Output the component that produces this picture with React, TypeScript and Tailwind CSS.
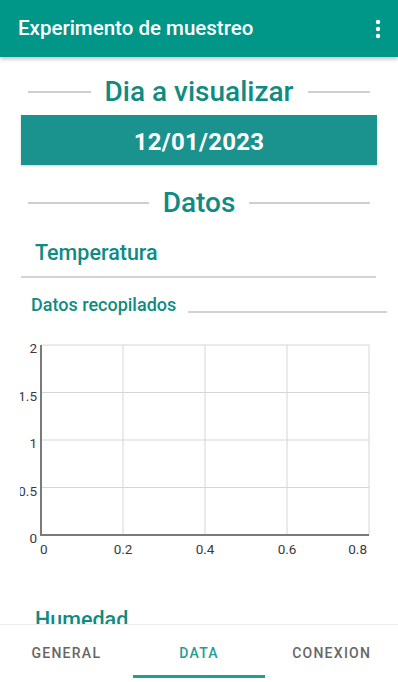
import React from 'react';

const TEAL = 'text-[#0f8b82]';

function TitleWithLines({ text }: { text: string }) {
  return (
    <div className="flex items-center gap-[14px] px-[28px] h-[38px]">
      <div className="flex-1 h-[2px] bg-[#cfcfcf]" />
      <span className={`text-[28px] font-medium leading-none ${TEAL}`}>{text}</span>
      <div className="flex-1 h-[2px] bg-[#cfcfcf]" />
    </div>
  );
}

function Chart() {
  // plot area in svg coords (svg starts at x=20 on the page)
  const left = 21;
  const right = 349;
  const top = 8;
  const bottom = 198;
  const xs = [0, 0.2, 0.4, 0.6, 0.8];
  const ys = [2, 1.5, 1, 0.5, 0];
  const xAt = (v: number) => left + (v / 0.8) * (right - left);
  const yAt = (v: number) => bottom - (v / 2) * (bottom - top);

  return (
    <svg width="360" height="222" className="block ml-[20px]" style={{ overflow: 'hidden' }}>
      {xs.map((v) => (
        <line key={'gx' + v} x1={xAt(v)} x2={xAt(v)} y1={top} y2={bottom} stroke="#d6d6d6" strokeWidth="1" />
      ))}
      {ys.map((v) => (
        <line key={'gy' + v} x1={left} x2={right} y1={yAt(v)} y2={yAt(v)} stroke="#d6d6d6" strokeWidth="1" />
      ))}
      <line x1={left} x2={left} y1={top} y2={bottom + 1} stroke="#7a7a7a" strokeWidth="2" />
      <line x1={left - 1} x2={right} y1={bottom} y2={bottom} stroke="#7a7a7a" strokeWidth="2" />
      {ys.map((v) => (
        <text
          key={'ly' + v}
          x={17}
          y={yAt(v) + 8}
          textAnchor="end"
          fontSize="13.5"
          fill="#3a3a3a"
          fontFamily="Roboto, sans-serif"
        >
          {String(v)}
        </text>
      ))}
      {xs.map((v, i) => (
        <text
          key={'lx' + v}
          x={i === 0 ? left - 1 : i === xs.length - 1 ? right - 2 : xAt(v)}
          y={217}
          textAnchor={i === 0 ? 'start' : i === xs.length - 1 ? 'end' : 'middle'}
          fontSize="13.5"
          fill="#3a3a3a"
          fontFamily="Roboto, sans-serif"
        >
          {String(v)}
        </text>
      ))}
    </svg>
  );
}

export default function App() {
  const tabs = ['General', 'Data', 'Conexion'];
  const active = 1;

  return (
    <div className="h-[682px] w-[398px] flex flex-col overflow-hidden bg-white font-['Roboto',sans-serif]">
      <header className="h-[57px] shrink-0 bg-[#009688] flex items-center justify-between pl-[18px] pr-[16px] shadow-[0_2px_4px_rgba(0,0,0,0.25)] relative z-10">
        <h1 className="text-white text-[20.5px] font-medium leading-none">Experimento de muestreo</h1>
        <svg width="8" height="22" viewBox="0 0 8 22">
          <circle cx="4" cy="4" r="2.2" fill="white" />
          <circle cx="4" cy="11" r="2.2" fill="white" />
          <circle cx="4" cy="18" r="2.2" fill="white" />
        </svg>
      </header>

      <main className="flex-1 overflow-hidden">
        <div className="mt-[16px]">
          <TitleWithLines text="Dia a visualizar" />
        </div>

        <button className="mt-[4px] ml-[21px] w-[356px] h-[50px] pt-[3px] bg-[#1a928e] text-white text-[24px] font-bold tracking-[0.01em] shadow-[0_1px_2px_rgba(0,0,0,0.2)] flex items-center justify-center">
          12/01/2023
        </button>

        <div className="mt-[19px]">
          <TitleWithLines text="Datos" />
        </div>

        <div className={`mt-[17px] pl-[35px] text-[21.5px] font-medium leading-[28px] ${TEAL}`}>Temperatura</div>
        <div className="mt-[9px] ml-[21px] w-[355px] h-[2px] bg-[#d3d3d3]" />

        <div className="mt-[16px] flex items-end pl-[31px]">
          <span className={`text-[18px] font-medium leading-[22px] ${TEAL}`}>Datos recopilados</span>
          <div className="ml-[12px] mr-[11px] mb-[3px] flex-1 h-[2px] bg-[#d3d3d3]" />
        </div>

        <div className="mt-[21px]">
          <Chart />
        </div>

        <div className={`mt-[47px] pl-[35px] text-[21.5px] font-medium leading-[28px] ${TEAL}`}>Humedad</div>
      </main>

      <nav className="h-[58px] shrink-0 border-t border-[#ececec] flex bg-white">
        {tabs.map((t, i) => (
          <div key={t} className="flex-1 flex flex-col">
            <div
              className={`flex-1 flex items-center justify-center pt-[6px] text-[14px] font-medium uppercase tracking-[0.09em] ${
                i === active ? 'text-[#1f9e91]' : 'text-[#666666]'
              }`}
            >
              {t}
            </div>
            <div className={`h-[3px] mb-[4px] ${i === active ? 'bg-[#1f9e91]' : 'bg-transparent'}`} />
          </div>
        ))}
      </nav>
    </div>
  );
}
